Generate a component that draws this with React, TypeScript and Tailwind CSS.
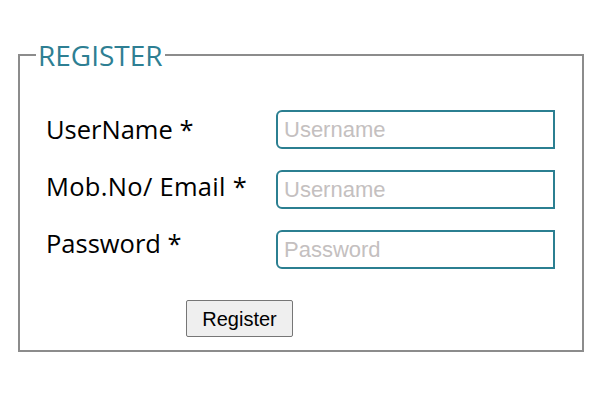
import React from "react";

export default function App() {
  const inputCls =
    "w-[279px] h-[39px] border-2 border-[#2b7f91] rounded-l-[6px] rounded-r-none px-[6px] text-[22px] text-black placeholder:text-[#c4c0c0] outline-none bg-white";
  return (
    <div className="w-[607px] h-[404px] bg-white pt-[40px] pl-[18px]">
      <fieldset className="w-[566px] h-[312px] border-2 border-[#8c8c8c] pl-[16px] pr-0 pt-0 pb-0 m-0">
        <legend
          className="px-[2px] text-[28px] leading-[30px] text-[#2e7f93]"
          style={{ fontFamily: '"Open Sans", sans-serif' }}
        >
          REGISTER
        </legend>
        <div className="flex pt-[40px]">
          <div
            className="flex flex-col w-[240px] pl-[10px] text-[25.5px] text-black"
            style={{ fontFamily: '"Open Sans", sans-serif' }}
          >
            <div className="h-[39px] flex items-center">UserName *</div>
            <div className="h-[39px] mt-[18px] flex items-center tracking-[0.3px]">Mob.No/ Email *</div>
            <div className="h-[39px] mt-[18px] flex items-center">Password *</div>
          </div>
          <div className="flex flex-col gap-[21px]" style={{ fontFamily: '"Liberation Sans", Arial, sans-serif' }}>
            <input className={inputCls} placeholder="Username" />
            <input className={inputCls} placeholder="Username" />
            <input className={inputCls} type="password" placeholder="Password" />
          </div>
        </div>
        <div className="pl-[150px] pt-[31px]">
          <button
            className="w-[107px] h-[37px] bg-[#efefef] border border-[#767676] rounded-[2px] text-[20px] text-black"
            style={{ fontFamily: '"Liberation Sans", Arial, sans-serif' }}
          >
            Register
          </button>
        </div>
      </fieldset>
    </div>
  );
}
